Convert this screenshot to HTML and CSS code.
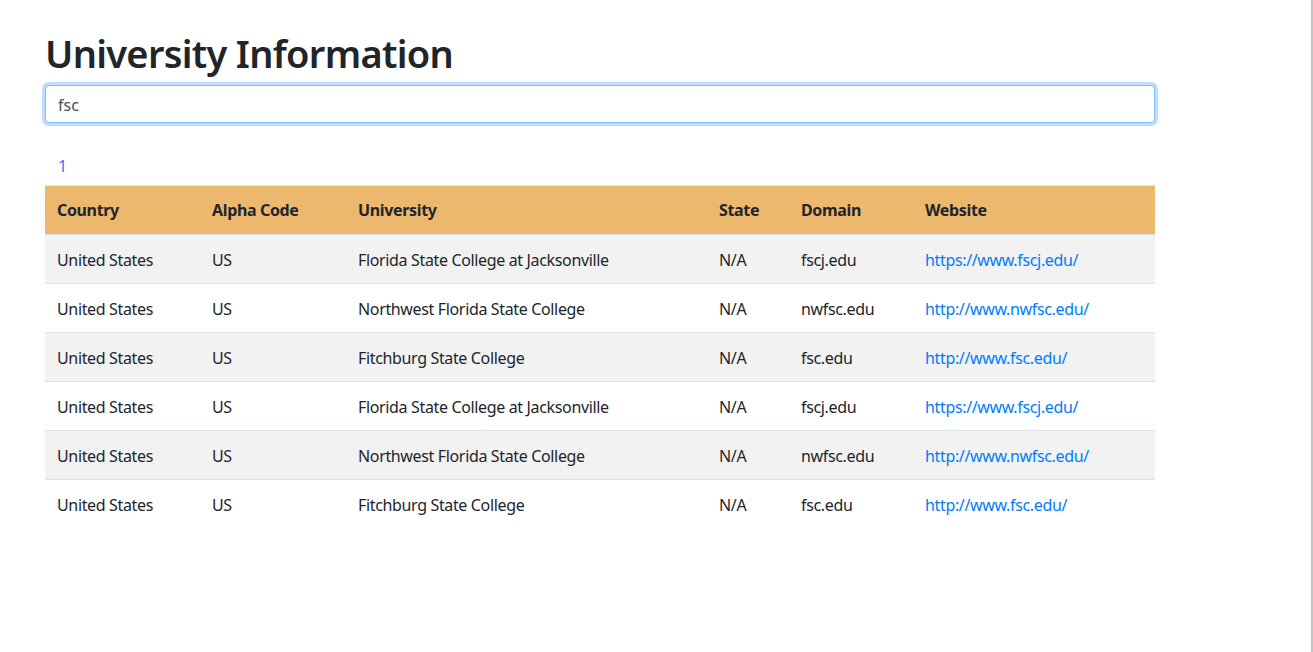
FILE: index.html
```html
<!DOCTYPE html>
<html lang="en">
<head>
<meta charset="utf-8">
<title>University Information</title>
<link rel="stylesheet" href="styles.css">
</head>
<body>
<main class="page">
  <h1 class="title">University Information</h1>
  <input class="search" type="text" value="fsc" autofocus>
  <nav class="pager"><a class="pager-link" href="#">1</a></nav>
  <table class="uni-table">
    <thead>
      <tr>
        <th class="c-country">Country</th>
        <th class="c-alpha">Alpha Code</th>
        <th class="c-uni">University</th>
        <th class="c-state">State</th>
        <th class="c-domain">Domain</th>
        <th class="c-web">Website</th>
      </tr>
    </thead>
    <tbody>
      <tr><td>United States</td><td>US</td><td>Florida State College at Jacksonville</td><td>N/A</td><td>fscj.edu</td><td><a href="#">https://www.fscj.edu/</a></td></tr>
      <tr><td>United States</td><td>US</td><td>Northwest Florida State College</td><td>N/A</td><td>nwfsc.edu</td><td><a href="#">http://www.nwfsc.edu/</a></td></tr>
      <tr><td>United States</td><td>US</td><td>Fitchburg State College</td><td>N/A</td><td>fsc.edu</td><td><a href="#">http://www.fsc.edu/</a></td></tr>
      <tr><td>United States</td><td>US</td><td>Florida State College at Jacksonville</td><td>N/A</td><td>fscj.edu</td><td><a href="#">https://www.fscj.edu/</a></td></tr>
      <tr><td>United States</td><td>US</td><td>Northwest Florida State College</td><td>N/A</td><td>nwfsc.edu</td><td><a href="#">http://www.nwfsc.edu/</a></td></tr>
      <tr><td>United States</td><td>US</td><td>Fitchburg State College</td><td>N/A</td><td>fsc.edu</td><td><a href="#">http://www.fsc.edu/</a></td></tr>
    </tbody>
  </table>
</main>
</body>
</html>
```
FILE: styles.css
```css
* { box-sizing: border-box; }
html, body { margin: 0; padding: 0; }
body {
  font-family: "Noto Sans", "Open Sans", Arial, sans-serif;
  font-size: 16px;
  line-height: 1.5;
  color: #212529;
  background: #fff;
  min-height: 100vh;
  border-right: 2px solid #c4c4c4;
  letter-spacing: -0.35px;
}
.page {
  width: 1110px;
  margin-left: 45px;
  padding-top: 29px;
}
.title {
  margin: 0 0 8px 0;
  font-size: 38px;
  font-weight: 600;
  line-height: 48px;
  letter-spacing: -0.7px;
}
.search {
  display: block;
  width: 100%;
  height: 38px;
  padding: 7px 12px 5px 12px;
  font: inherit;
  font-size: 16px;
  color: #495057;
  border: 1px solid #80bdff;
  border-radius: 4px;
  box-shadow: 0 0 0 3px rgba(0, 123, 255, 0.25);
  outline: none;
  caret-color: #000;
}
.pager {
  margin: 31px 0 7px 0;
  padding-left: 13px;
  height: 24px;
  line-height: 24px;
}
.pager-link {
  color: #3b7bf6;
  text-decoration: none;
}
.uni-table {
  width: 100%;
  border-collapse: collapse;
  table-layout: fixed;
}
.uni-table th,
.uni-table td {
  padding: 13px 12px 11px 12px;
  text-align: left;
  vertical-align: top;
  border-top: 1px solid #dee2e6;
  white-space: nowrap;
}
.uni-table thead th {
  padding: 12px;
  background: #ecb86e;
  font-weight: 700;
  border-bottom: 1px solid #dee2e6;
}
.uni-table tbody tr:nth-child(odd) { background: #f2f2f2; }
.uni-table tbody tr:first-child td { border-top: 0; }
.uni-table a { color: #007bff; text-decoration: none; }
.c-country { width: 155px; }
.c-alpha { width: 146px; }
.c-uni { width: 361px; }
.c-state { width: 82px; }
.c-domain { width: 124px; }
.c-web { width: 242px; }
```
